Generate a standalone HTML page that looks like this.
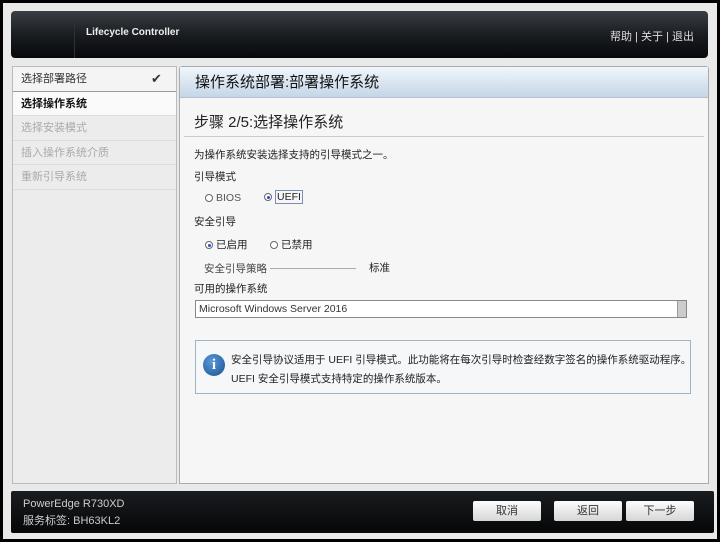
<!DOCTYPE html>
<html><head><meta charset="utf-8"><style>
*{margin:0;padding:0;box-sizing:border-box}
body{width:720px;height:542px;background:#000;font-family:"Liberation Sans","Noto Sans CJK SC",sans-serif;position:relative;overflow:hidden}
.frame{position:absolute;left:3px;top:3px;width:714px;height:536px;background:#e9e9e9}
.hdr{position:absolute;left:11px;top:11px;width:697px;height:47px;border-radius:4px;background:linear-gradient(#3a3f45,#1a1d21 50%,#07090b);}
.hdr .sep{position:absolute;left:63px;top:13px;width:1px;height:34px;background:#2e3236}
.hdr .t{position:absolute;left:75px;top:16px;color:#eee;font-size:10px;font-weight:bold}
.hdr .r{position:absolute;right:14px;top:17px;color:#ddd;font-size:11px}
.side{position:absolute;left:12px;top:66px;width:165px;height:418px;background:#ececec;border:1px solid #bbb}
.side div{height:24.5px;line-height:24px;padding-left:8px;font-size:11px;color:#aaa;border-bottom:1px solid #ddd}
.side .a{background:#f4f4f4;color:#333;border-bottom:1px solid #999}
.side .b{background:#fafafa;color:#111;font-weight:bold}
.main{position:absolute;left:179px;top:66px;width:530px;height:418px;background:#f6f6f6;border:1px solid #aaa;border-radius:3px 3px 0 0}
.tb{height:31px;background:linear-gradient(#f0f6fc,#c5d6e6);border-bottom:1px solid #b0c0d0;font-size:15px;line-height:32px;padding-left:15px;color:#111}
.h2{position:absolute;left:14px;top:44px;font-size:15px;color:#222}
.hr{position:absolute;left:4px;top:69px;width:520px;height:1px;background:#ccc}
.x{position:absolute;font-size:10.5px;color:#222;white-space:nowrap}
.rad{display:inline-block;width:8px;height:8px;border:1px solid #666;border-radius:50%;vertical-align:-1px;margin-right:3px;background:#fff;position:relative}
.rad.on::after{content:"";position:absolute;left:1.5px;top:1.5px;width:3px;height:3px;border-radius:50%;background:#2a4fc0}
.sel{position:absolute;left:15px;top:233px;width:492px;height:18px;border:1px solid #888;background:#fff;font-size:10.5px;line-height:16px;padding-left:3px;color:#333}
.sel i{position:absolute;right:0;top:0;width:9px;height:16px;background:#ccc;border-left:1px solid #999}
.info{position:absolute;left:15px;top:273px;width:496px;height:54px;border:1px solid #9cb4c8;background:#f6f7f8}
.ic{position:absolute;left:7px;top:13px;width:22px;height:22px;border-radius:50%;background:radial-gradient(circle at 40% 35%,#5a9ad8,#1a4e90);color:#fff;font:bold 15px "Liberation Serif",serif;text-align:center;line-height:22px}
.ft{position:absolute;left:11px;top:491px;width:703px;height:42px;background:linear-gradient(#1a1d20,#050607);border-radius:2px}
.ft .p{position:absolute;left:12px;top:5px;color:#ccc;font-size:11px;line-height:17px}
.btn{position:absolute;top:10px;width:68px;height:20px;background:linear-gradient(#fdfdfd,#d6d6d6);border-radius:2px;font-size:11px;text-align:center;line-height:20px;color:#333}
</style></head><body>
<div class="frame"></div>
<div class="hdr"><div class="sep"></div><div class="t">Lifecycle Controller</div><div class="r">帮助 | 关于 | 退出</div></div>
<div class="side">
<div class="a">选择部署路径<span style="position:absolute;left:138px;font-size:13px;color:#333">✔</span></div>
<div class="b">选择操作系统</div>
<div>选择安装模式</div>
<div>插入操作系统介质</div>
<div>重新引导系统</div>
</div>
<div class="main">
<div class="tb">操作系统部署:部署操作系统</div>
<div class="h2">步骤 2/5:选择操作系统</div>
<div class="hr"></div>
<div class="x" style="left:14px;top:80px">为操作系统安装选择支持的引导模式之一。</div>
<div class="x" style="left:14px;top:102px">引导模式</div>
<div class="x" style="left:25px;top:125px;color:#555"><span class="rad"></span>BIOS</div>
<div class="x" style="left:84px;top:124px"><span class="rad on"></span><span style="border:1px solid #7890b0;padding:0 1px">UEFI</span></div>
<div class="x" style="left:14px;top:147px">安全引导</div>
<div class="x" style="left:25px;top:170px"><span class="rad on"></span>已启用</div>
<div class="x" style="left:90px;top:170px"><span class="rad"></span>已禁用</div>
<div class="x" style="left:24px;top:194px;color:#444">安全引导策略 <span style="display:inline-block;width:86px;border-top:1px solid #aaa;vertical-align:3px"></span></div>
<div class="x" style="left:189px;top:193px">标准</div>
<div class="x" style="left:14px;top:214px">可用的操作系统</div>
<div class="sel">Microsoft Windows Server 2016<i></i></div>
<div class="info"><div class="ic">i</div>
<div class="x" style="left:35px;top:11px">安全引导协议适用于 UEFI 引导模式。此功能将在每次引导时检查经数字签名的操作系统驱动程序。</div>
<div class="x" style="left:35px;top:30px">UEFI 安全引导模式支持特定的操作系统版本。</div></div>
</div>
<div class="ft"><div class="p">PowerEdge R730XD<br>服务标签: BH63KL2</div>
<div class="btn" style="left:462px">取消</div>
<div class="btn" style="left:543px">返回</div>
<div class="btn" style="left:615px">下一步</div></div>
</body></html>
